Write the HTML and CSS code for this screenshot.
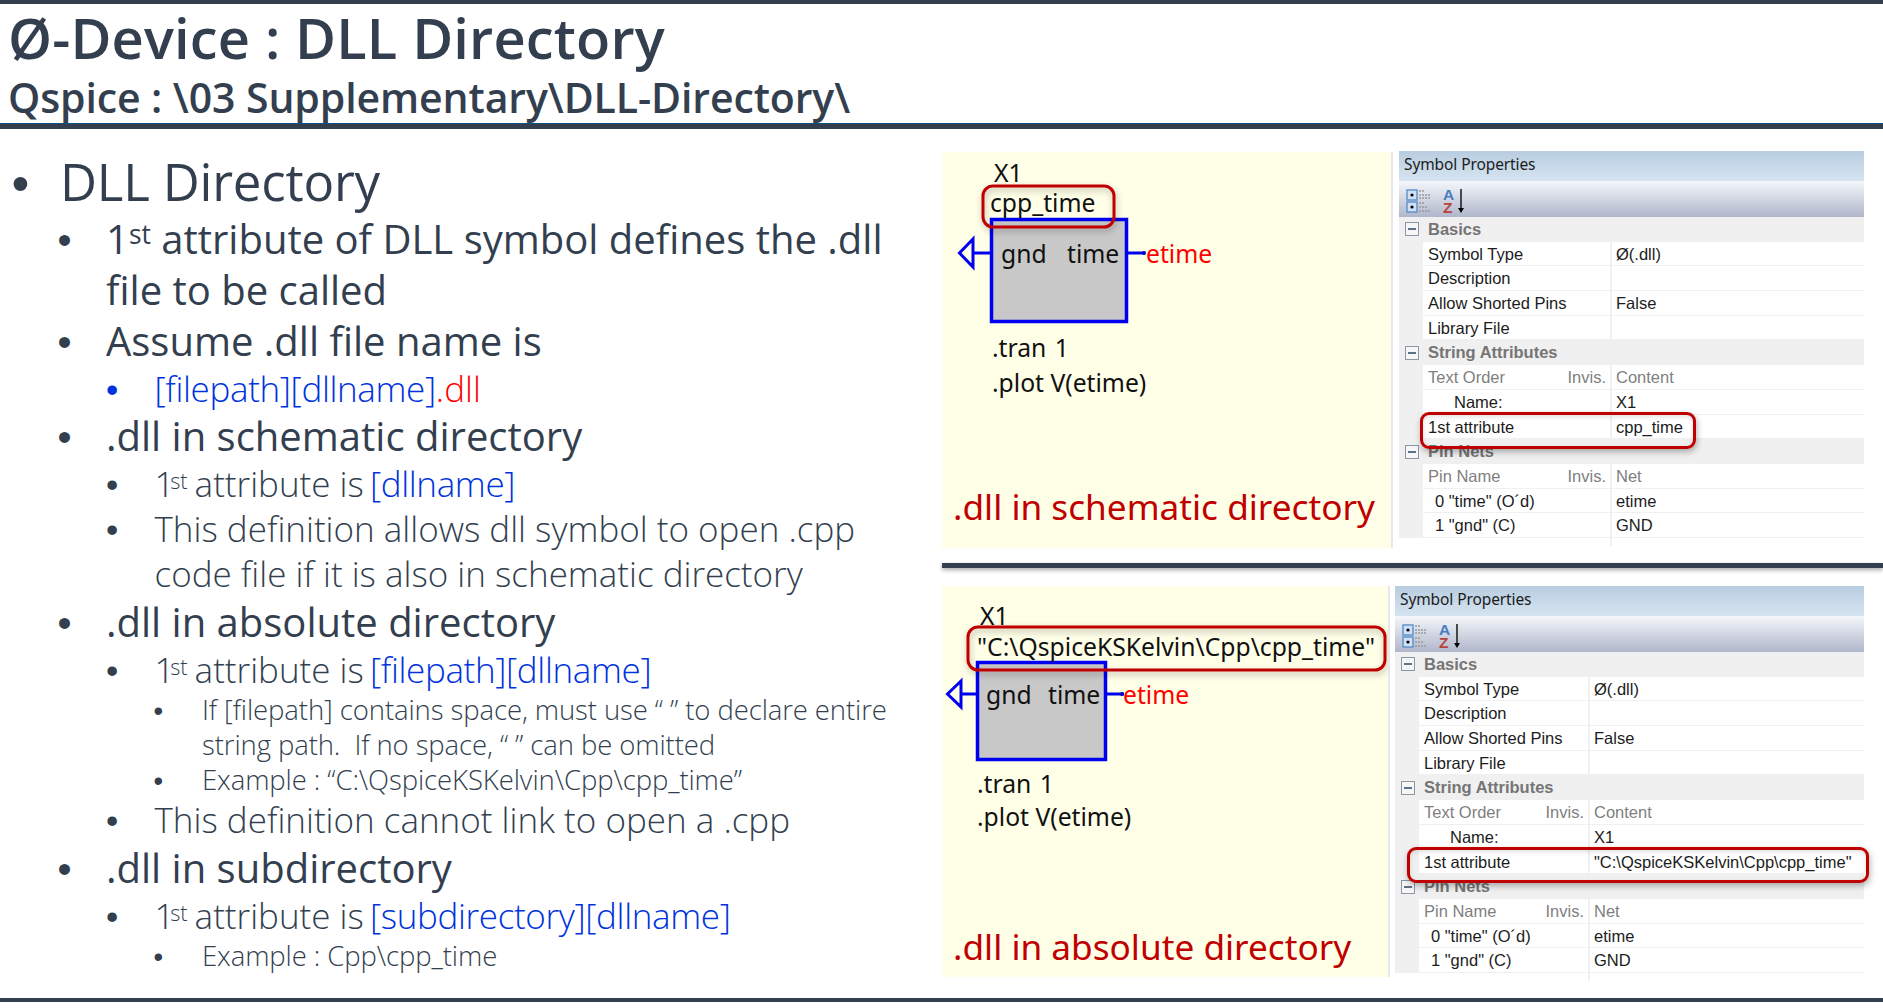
FILE: index.html
```html
<!DOCTYPE html>
<html lang="en">
<head>
<meta charset="utf-8">
<title>DLL Directory</title>
<link rel="stylesheet" href="styles.css">
</head>
<body>
<header class="head">
  <h1 class="title">Ø-Device : DLL Directory</h1>
  <h2 class="subtitle">Qspice : \03 Supplementary\DLL-Directory\</h2>
  <div class="head-rule"></div>
</header>
<main class="main">
  <section class="notes">
    <ul class="l1">
      <li>DLL Directory
        <ul class="l2">
          <li>1<sup>st</sup> attribute of DLL symbol defines the .dll file to be called</li>
          <li>Assume .dll file name is
            <ul class="l3 l3-blue"><li><span class="blue">[filepath][dllname]</span><span class="red">.dll</span></li></ul>
          </li>
          <li class="tight">.dll in schematic directory
            <ul class="l3">
              <li>1<sup>st</sup> attribute is <span class="blue shift">[dllname]</span></li>
              <li>This definition allows dll symbol to open .cpp code file if it is also in schematic directory</li>
            </ul>
          </li>
          <li>.dll in absolute directory
            <ul class="l3">
              <li>1<sup>st</sup> attribute is <span class="blue shift">[filepath][dllname]</span>
                <ul class="l4">
                  <li>If [filepath] contains space, must use “ ” to declare entire string path.&nbsp; If no space, “ ” can be omitted</li>
                  <li>Example : “C:\QspiceKSKelvin\Cpp\cpp_time”</li>
                </ul>
              </li>
              <li>This definition cannot link to open a .cpp</li>
            </ul>
          </li>
          <li>.dll in subdirectory
            <ul class="l3">
              <li>1<sup>st</sup> attribute is <span class="blue shift">[subdirectory][dllname]</span>
                <ul class="l4"><li>Example : Cpp\cpp_time</li></ul>
              </li>
            </ul>
          </li>
        </ul>
      </li>
    </ul>
  </section>

  <section class="figures">
    <div class="figure figure-a">
      <svg class="schem schem-a" viewBox="942 152 449 396" aria-label="Schematic">
        <defs><filter id="sa" x="-10%" y="-20%" width="120%" height="150%"><feDropShadow dx="1" dy="3" stdDeviation="3" flood-color="#000" flood-opacity=".3"/></filter></defs>
        <rect class="box" x="991.5" y="219.5" width="135" height="102"/>
        <path class="wire" d="M973 253H990M973 239L959.5 253L973 267ZM1128 253H1145"/>
        <circle class="dot" cx="1144" cy="253" r="2"/>
        <text class="s" x="994" y="182">X1</text>
        <text class="s" x="990" y="212">cpp_time</text>
        <rect class="hl" x="983" y="186" width="131" height="41" rx="10"/>
        <text class="s" x="1001" y="263">gnd</text>
        <text class="s" x="1067" y="263">time</text>
        <text class="s net" x="1146" y="263">etime</text>
        <text class="s wide" x="992" y="357">.tran 1</text>
        <text class="s" x="992" y="392">.plot V(etime)</text>
        <text class="cap" x="953" y="520">.dll in schematic directory</text>
      </svg>
      <div class="props props-a">
        <div class="p-title">Symbol Properties</div>
        <div class="p-tools">
          <svg class="tool-ic" viewBox="0 0 28 24" aria-hidden="true">
            <rect class="sq" x="1" y="1" width="10" height="10"/><rect class="sq" x="1" y="13" width="10" height="10"/>
            <circle cx="6" cy="6" r="1.6"/><circle cx="6" cy="18" r="1.6"/>
            <path class="ln" d="M13 2h5M13 6h11M13 9h11M13 14h5M13 18h8M13 22h11"/>
          </svg>
          <svg class="sort-ic" viewBox="0 -6 26 36" aria-hidden="true">
            <text class="az az-a" x="1" y="11">A</text><text class="az az-z" x="1" y="23.5">Z</text>
            <path class="arr" d="M19 0V21"/><path d="M16 19h6l-3 5z"/>
          </svg>
        </div>
        <div class="p-cat"><i class="minus"></i>Basics</div>
        <div class="p-row"><span>Symbol Type</span><span>Ø(.dll)</span></div>
        <div class="p-row"><span>Description</span><span></span></div>
        <div class="p-row"><span>Allow Shorted Pins</span><span>False</span></div>
        <div class="p-row"><span>Library File</span><span></span></div>
        <div class="p-cat"><i class="minus"></i>String Attributes</div>
        <div class="p-row p-head"><span>Text Order<em>Invis.</em></span><span>Content</span></div>
        <div class="p-row"><span class="ind-l">Name:</span><span>X1</span></div>
        <div class="p-row"><span>1st attribute</span><span>cpp_time</span></div>
        <div class="p-cat"><i class="minus"></i>Pin Nets</div>
        <div class="p-row p-head"><span>Pin Name<em>Invis.</em></span><span>Net</span></div>
        <div class="p-row"><span class="ind-s">0 "time" (O´d)</span><span>etime</span></div>
        <div class="p-row"><span class="ind-s">1 "gnd" (C)</span><span>GND</span></div>
        <div class="p-end"><span></span><span></span></div>
        <div class="callout callout-a"></div>
      </div>
    </div>

    <div class="divider"></div>

    <div class="figure figure-b">
      <svg class="schem schem-b" viewBox="942 586 446 391" aria-label="Schematic">
        <defs><filter id="sb" x="-5%" y="-20%" width="110%" height="150%"><feDropShadow dx="1" dy="3" stdDeviation="3" flood-color="#000" flood-opacity=".3"/></filter></defs>
        <rect class="box" x="977.5" y="662.5" width="128" height="97"/>
        <path class="wire" d="M961 694H976M961 681L947.5 694L961 707ZM1107 694H1124"/>
        <circle class="dot" cx="1122" cy="694" r="2"/>
        <text class="s" x="980" y="625">X1</text>
        <text class="s" x="977" y="656">"C:\QspiceKSKelvin\Cpp\cpp_time"</text>
        <rect class="hl hl-b" x="968" y="627" width="417" height="43" rx="10"/>
        <text class="s" x="986" y="704">gnd</text>
        <text class="s" x="1048" y="704">time</text>
        <text class="s net" x="1123" y="704">etime</text>
        <text class="s wide" x="977" y="793">.tran 1</text>
        <text class="s" x="977" y="826">.plot V(etime)</text>
        <text class="cap" x="953" y="960">.dll in absolute directory</text>
      </svg>
      <div class="props props-b">
        <div class="p-title">Symbol Properties</div>
        <div class="p-tools">
          <svg class="tool-ic" viewBox="0 0 28 24" aria-hidden="true">
            <rect class="sq" x="1" y="1" width="10" height="10"/><rect class="sq" x="1" y="13" width="10" height="10"/>
            <circle cx="6" cy="6" r="1.6"/><circle cx="6" cy="18" r="1.6"/>
            <path class="ln" d="M13 2h5M13 6h11M13 9h11M13 14h5M13 18h8M13 22h11"/>
          </svg>
          <svg class="sort-ic" viewBox="0 -6 26 36" aria-hidden="true">
            <text class="az az-a" x="1" y="11">A</text><text class="az az-z" x="1" y="23.5">Z</text>
            <path class="arr" d="M19 0V21"/><path d="M16 19h6l-3 5z"/>
          </svg>
        </div>
        <div class="p-cat"><i class="minus"></i>Basics</div>
        <div class="p-row"><span>Symbol Type</span><span>Ø(.dll)</span></div>
        <div class="p-row"><span>Description</span><span></span></div>
        <div class="p-row"><span>Allow Shorted Pins</span><span>False</span></div>
        <div class="p-row"><span>Library File</span><span></span></div>
        <div class="p-cat"><i class="minus"></i>String Attributes</div>
        <div class="p-row p-head"><span>Text Order<em>Invis.</em></span><span>Content</span></div>
        <div class="p-row"><span class="ind-l">Name:</span><span>X1</span></div>
        <div class="p-row"><span>1st attribute</span><span>"C:\QspiceKSKelvin\Cpp\cpp_time"</span></div>
        <div class="p-cat"><i class="minus"></i>Pin Nets</div>
        <div class="p-row p-head"><span>Pin Name<em>Invis.</em></span><span>Net</span></div>
        <div class="p-row"><span class="ind-s">0 "time" (O´d)</span><span>etime</span></div>
        <div class="p-row"><span class="ind-s">1 "gnd" (C)</span><span>GND</span></div>
        <div class="p-end"><span></span><span></span></div>
        <div class="callout callout-b"></div>
      </div>
    </div>
  </section>
</main>
<div class="foot-rule"></div>
</body>
</html>
```
FILE: styles.css
```css
* { box-sizing: border-box; }
html, body { margin: 0; height: 100%; }
body {
  width: 1883px;
  height: 1008px;
  overflow: hidden;
  background: #fff;
  color: #333f4f;
  font-family: "Open Sans", "Noto Sans", sans-serif;
  border-top: 4px solid #333f4f;
}

/* header */
.head { padding-top: 1px; }
.title {
  margin: 0;
  padding-left: 8px;
  font-size: 56px;
  line-height: 64px;
  font-weight: 600;
  letter-spacing: .15px;
}
.subtitle {
  margin: 3px 0 0;
  padding: 0 0 1px 8px;
  font-size: 41px;
  line-height: 50px;
  font-weight: 600;
  letter-spacing: -.1px;
}
.head-rule {
  height: 6px;
  background: #333f4f;
  border-top: 1px solid #0b4f82;
}

/* main */
.main {
  display: grid;
  grid-template-columns: 942px 941px;
  height: 870px;
}
.notes { padding-top: 22px; min-width: 0; }
.notes ul { list-style: none; margin: 0; padding: 0; }
.notes li { text-indent: -40px; padding-left: 40px; }
.notes li::before {
  content: "•";
  display: inline-block;
  width: 48.5px;
  margin-left: -8.5px;
  text-indent: 0;
  line-height: 0;
  font-family: "Liberation Sans", sans-serif;
  font-weight: 400;
  letter-spacing: 0;
}
.l1 { padding-left: 20px !important; }
.l1 > li { font-size: 51px; line-height: 60px; font-weight: 400; letter-spacing: -.2px; }
.l2 { margin-left: -40px !important; padding-left: 46px !important; margin-top: 2px !important; }
.l2 > li { font-size: 40px; line-height: 51px; font-weight: 400; letter-spacing: 0; margin-right: 26px; }
.l3 { padding-left: 8.5px !important; }
.l3 > li { font-size: 35px; line-height: 45px; font-weight: 300; letter-spacing: 0; }
.l4 { padding-left: 7.5px !important; }
.l4 > li { font-size: 27.5px; line-height: 35px; font-weight: 300; letter-spacing: -.1px; }
.l3-blue > li::before { color: #0033dd; }
.tight { margin-top: -1px; }
sup { font-size: 66%; line-height: 0; vertical-align: baseline; position: relative; top: -.38em; }
.l3 sup { font-size: 62%; margin: 0 -2px 0 -.2em; }
.blue { color: #0033dd; letter-spacing: -.35px; }
.shift { margin-left: -3px; }
.red { color: #f00; }

/* figures */
.figures { padding-top: 22px; min-width: 0; }
.figure { display: flex; }
.figure-a { height: 397px; }
.figure-b { height: 391px; }
.divider {
  height: 5px;
  margin: 15px 0 18px;
  background: #333f4f;
  box-shadow: 0 2px 4px rgba(0, 0, 0, .35);
}
.schem { display: block; background: #ffffe8; border-right: 2px solid #e6e6ee; flex: none; }
.schem-a { width: 451px; height: 396px; margin-top: 1px; }
.schem-b { width: 448px; height: 391px; }
.s { font-family: "Noto Sans", sans-serif; font-size: 24.7px; fill: #111; }
.wide { word-spacing: 2px; }
.net { fill: #f00; }
.cap { font-family: "Noto Sans", sans-serif; font-size: 35.2px; fill: #c00000; }
.box { fill: #c8c8c8; stroke: #0000f0; stroke-width: 3.5; }
.wire { fill: none; stroke: #0000f0; stroke-width: 3; }
.dot { fill: #0000c0; }
.hl { fill: none; stroke: #c00000; stroke-width: 3; filter: url(#sa); }
.hl-b { filter: url(#sb); }

/* property grid */
.props {
  position: relative;
  flex: none;
  font-family: "Liberation Sans", Arial, sans-serif;
  font-size: 16.5px;
  color: #1c1c1c;
  background: #fff;
}
.props-a { width: 465px; margin-left: 6px; --label: 187px; }
.props-b { width: 469px; margin-left: 5px; --label: 169px; }
.p-title {
  height: 30px;
  padding-left: 5px;
  line-height: 27px;
  font-family: "Noto Sans", sans-serif;
  font-size: 15.5px;
  letter-spacing: -.1px;
  background: linear-gradient(#b8cde0, #d6e4f1);
}
.p-tools {
  height: 36px;
  display: flex;
  align-items: center;
  gap: 8px;
  padding-left: 7px;
  background: linear-gradient(#f4f7fb, #b0b6cb);
}
.tool-ic { display: block; width: 28px; height: 24px; flex: none; margin-top: 3px; }
.sort-ic { display: block; width: 26px; height: 36px; flex: none; margin-top: 3px; }
.sq { fill: #cfe0f4; stroke: #5b8fc8; stroke-width: 1.4; }
.ln { stroke: #9a9a9a; stroke-width: 1.6; fill: none; stroke-dasharray: 2 1; }
.az { font-family: "Liberation Sans", sans-serif; font-weight: 700; font-size: 15.5px; }
.az-a { fill: #4a7cc4; }
.az-z { fill: #b8433a; }
.arr { stroke: #222; stroke-width: 1.6; }
.p-cat {
  height: 24.7px;
  display: flex;
  align-items: center;
  gap: 9px;
  padding-left: 6px;
  background: #f0f0f0;
  font-weight: 700;
  color: #757575;
}
.minus {
  flex: none;
  width: 14px;
  height: 14px;
  display: flex;
  align-items: center;
  justify-content: center;
  background: #f6f6f6;
  border: 1px solid #8b97a6;
}
.minus::after { content: ""; width: 8px; height: 2px; background: #5f7187; }
.p-row, .p-end {
  height: 24.7px;
  display: grid;
  grid-template-columns: var(--label) 1fr;
  border-left: 24px solid #f0f0f0;
  line-height: 24px;
}
.p-row { border-bottom: 1px solid #f0f0f0; }
.p-row > span { padding-left: 5px; white-space: nowrap; }
.p-row > span:last-child { border-left: 2px solid #f0f0f0; padding-left: 4px; }
.p-row em { float: right; font-style: normal; padding-right: 4px; }
.p-head { color: #808080; }
.ind-l { text-indent: 26px; }
.ind-s { text-indent: 7px; }
.p-end { border-left-color: transparent; height: 8px; }
.p-end > span:last-child { border-left: 2px solid #f0f0f0; }
.callout {
  position: absolute;
  border: 3px solid #c00000;
  border-radius: 9px;
  box-shadow: 1px 3px 6px rgba(0, 0, 0, .3), inset 0 2px 5px rgba(0, 0, 0, .12);
}
.callout-a { left: 21px; top: 261px; width: 276px; height: 37px; }
.callout-b { left: 12px; top: 261px; width: 462px; height: 36px; }

.foot-rule { margin-top: -1px; height: 4px; background: #333f4f; }
```
